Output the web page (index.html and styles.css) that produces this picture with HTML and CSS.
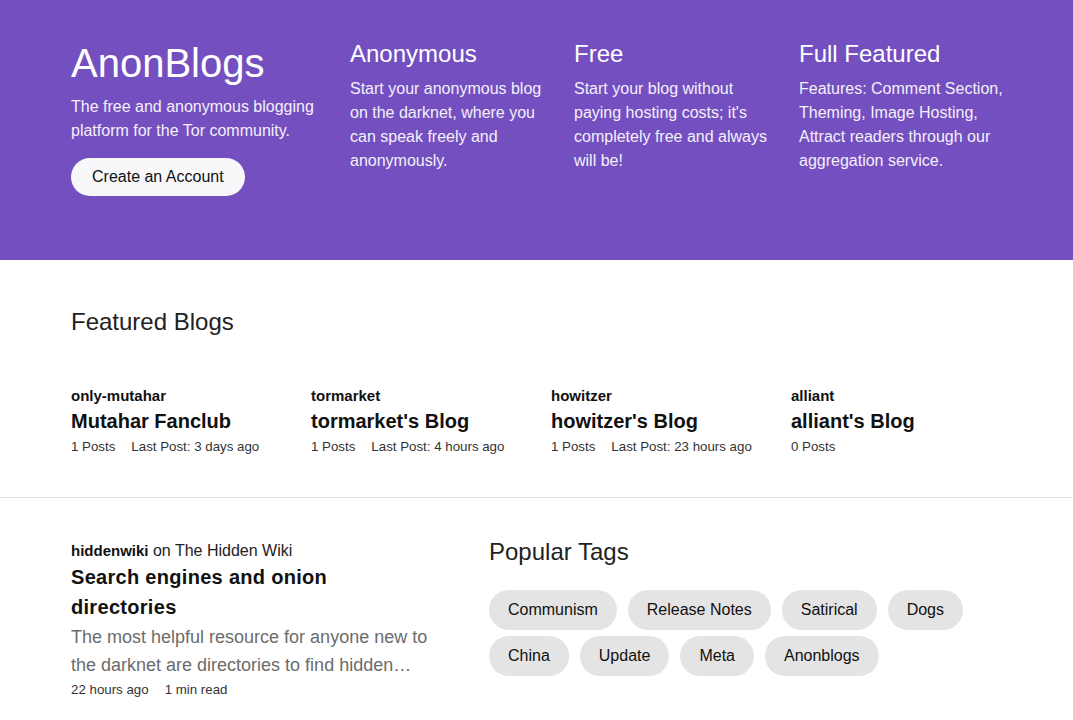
FILE: index.html
```html
<!DOCTYPE html>
<html lang="en">
<head>
    <meta charset="UTF-8">
    <meta name="viewport" content="width=device-width, initial-scale=1.0">
    <title>AnonBlogs</title>
    <link rel="stylesheet" href="styles.css">
</head>
<body>

    <header class="hero">
        <div class="container hero-grid">
            <div class="intro">
                <h1>AnonBlogs</h1>
                <p>The free and anonymous blogging platform for the Tor community.</p>
                <a class="btn" href="#">Create an Account</a>
            </div>
            <div class="feature">
                <h3>Anonymous</h3>
                <p>Start your anonymous blog on the darknet, where you can speak freely and anonymously.</p>
            </div>
            <div class="feature">
                <h3>Free</h3>
                <p>Start your blog without paying hosting costs; it's completely free and always will be!</p>
            </div>
            <div class="feature">
                <h3>Full Featured</h3>
                <p>Features: Comment Section, Theming, Image Hosting, Attract readers through our aggregation service.</p>
            </div>
        </div>
    </header>

    <section class="featured">
        <div class="container">
            <h2>Featured Blogs</h2>
            <div class="blog-grid">
                <div class="blog">
                    <div class="blog-user">only-mutahar</div>
                    <div class="blog-title">Mutahar Fanclub</div>
                    <div class="meta"><span>1 Posts</span><span>Last Post: 3 days ago</span></div>
                </div>
                <div class="blog">
                    <div class="blog-user">tormarket</div>
                    <div class="blog-title">tormarket's Blog</div>
                    <div class="meta"><span>1 Posts</span><span>Last Post: 4 hours ago</span></div>
                </div>
                <div class="blog">
                    <div class="blog-user">howitzer</div>
                    <div class="blog-title">howitzer's Blog</div>
                    <div class="meta"><span>1 Posts</span><span>Last Post: 23 hours ago</span></div>
                </div>
                <div class="blog">
                    <div class="blog-user">alliant</div>
                    <div class="blog-title">alliant's Blog</div>
                    <div class="meta"><span>0 Posts</span></div>
                </div>
            </div>
        </div>
    </section>

    <section class="lower">
        <div class="container lower-grid">
            <div class="post">
                <div class="post-by"><b>hiddenwiki</b> on The Hidden Wiki</div>
                <div class="post-title">Search engines and onion directories</div>
                <p class="post-excerpt">The most helpful resource for anyone new to the darknet are directories to find hidden…</p>
                <div class="meta"><span>22 hours ago</span><span>1 min read</span></div>
            </div>
            <div class="tags">
                <h2>Popular Tags</h2>
                <div class="tag-list">
                    <a class="tag" href="#">Communism</a>
                    <a class="tag" href="#">Release Notes</a>
                    <a class="tag" href="#">Satirical</a>
                    <a class="tag" href="#">Dogs</a>
                    <a class="tag" href="#">China</a>
                    <a class="tag" href="#">Update</a>
                    <a class="tag" href="#">Meta</a>
                    <a class="tag" href="#">Anonblogs</a>
                </div>
            </div>
        </div>
    </section>

</body>
</html>
```

FILE: styles.css
```css
body {
    margin: 0;
    font-family: "Liberation Sans", Arial, sans-serif;
    color: #111;
    background: #fff;
}
a {
    text-decoration: none;
    color: inherit;
}
.container {
    width: 931px;
    margin: 0 auto;
}
.hero {
    background-color: #734fbf;
    color: #fff;
    height: 260px;
    box-sizing: border-box;
    padding-top: 40px;
}
.hero-grid {
    display: grid;
    grid-template-columns: 255px 200px 201px 220px;
    column-gap: 24px;
}
.intro h1 {
    font-size: 40px;
    font-weight: normal;
    line-height: 46px;
    margin: 0 0 9px;
}
.intro p {
    font-size: 16px;
    line-height: 24px;
    margin: 0 0 15px;
    color: #f4f0fb;
}
.btn {
    display: inline-block;
    background: #f8f8fa;
    color: #111;
    font-size: 16px;
    line-height: 38px;
    padding: 0 21px;
    border-radius: 19px;
}
.feature h3 {
    font-size: 24px;
    font-weight: normal;
    line-height: 28px;
    margin: 0 0 9px;
}
.feature p {
    font-size: 16px;
    line-height: 24px;
    margin: 0;
    color: #f4f0fb;
}
.featured {
    padding-top: 48px;
    padding-bottom: 39px;
    border-bottom: 1px solid #e3e3e3;
}
h2 {
    font-size: 24px;
    font-weight: normal;
    color: #222;
    line-height: 28px;
    margin: 0;
}
.blog-grid {
    display: grid;
    grid-template-columns: repeat(4, 240px);
    margin-top: 50px;
}
.blog-user {
    font-size: 15px;
    font-weight: bold;
    line-height: 20px;
}
.blog-title {
    font-size: 20px;
    font-weight: bold;
    line-height: 30px;
}
.meta {
    font-size: 13.3px;
    color: #333;
    line-height: 22px;
    display: flex;
    gap: 16px;
}
.lower {
    padding-top: 41px;
}
.lower-grid {
    display: grid;
    grid-template-columns: 362px 1fr;
    column-gap: 56px;
}
.post-by {
    font-size: 16px;
    line-height: 24px;
    color: #222;
}
.post-by b {
    font-size: 15px;
    color: #111;
}
.post-title {
    font-size: 20px;
    font-weight: bold;
    line-height: 30px;
    letter-spacing: 0.3px;
    margin-top: -1px;
}
.post-excerpt {
    font-size: 18px;
    line-height: 28px;
    color: #6b6b6b;
    margin: 1px 0 0;
}
.meta span {
    white-space: nowrap;
}
.tags h2 {
    line-height: 26px;
}
.tag-list {
    display: flex;
    flex-wrap: wrap;
    gap: 6px 11px;
    margin-top: 25px;
}
.tag {
    background: #e4e4e4;
    border-radius: 20px;
    font-size: 16px;
    line-height: 40px;
    padding: 0 19px;
    color: #111;
}
```
